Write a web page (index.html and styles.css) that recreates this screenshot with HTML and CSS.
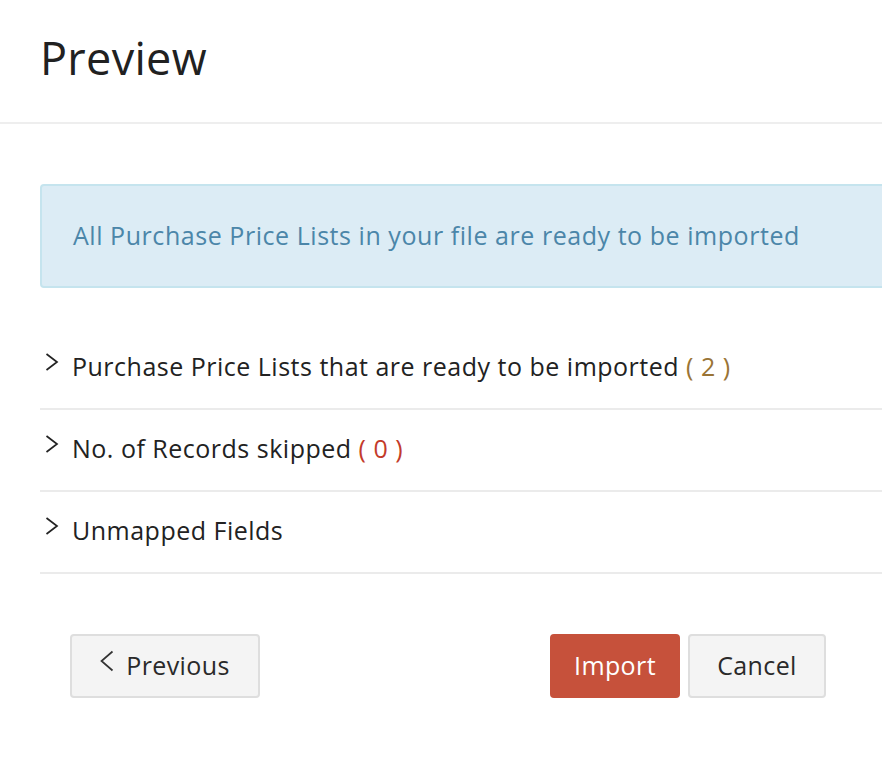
FILE: index.html
```html
<!DOCTYPE html>
<html>
<head>
<meta charset="utf-8">
<link rel="stylesheet" href="styles.css">
</head>
<body>
<div class="page">
  <header class="header">
    <h1 class="title">Preview</h1>
  </header>
  <main class="content">
    <div class="alert">All Purchase Price Lists in your file are ready to be imported</div>
    <ul class="sections">
      <li class="section">
        <svg class="chev" viewBox="0 0 14 20" width="14" height="20"><path d="M1.5 2 L12 10 L1.5 18" fill="none" stroke="#222" stroke-width="1.7"/></svg>
        <span>Purchase Price Lists that are ready to be imported <span class="count-ok">( 2 )</span></span>
      </li>
      <li class="section">
        <svg class="chev" viewBox="0 0 14 20" width="14" height="20"><path d="M1.5 2 L12 10 L1.5 18" fill="none" stroke="#222" stroke-width="1.7"/></svg>
        <span>No. of Records skipped <span class="count-bad">( 0 )</span></span>
      </li>
      <li class="section">
        <svg class="chev" viewBox="0 0 14 20" width="14" height="20"><path d="M1.5 2 L12 10 L1.5 18" fill="none" stroke="#222" stroke-width="1.7"/></svg>
        <span>Unmapped Fields</span>
      </li>
    </ul>
    <div class="actions">
      <button class="btn btn-default btn-prev">
        <svg class="chev-left" viewBox="0 0 14 22" width="14" height="22"><path d="M12.5 1.5 L1.5 11 L12.5 20.5" fill="none" stroke="#333" stroke-width="1.7"/></svg>
        Previous
      </button>
      <div class="right-actions">
        <button class="btn btn-primary btn-import">Import</button>
        <button class="btn btn-default btn-cancel">Cancel</button>
      </div>
    </div>
  </main>
</div>
</body>
</html>
```
FILE: styles.css
```css
html, body {
  margin: 0;
  padding: 0;
  background: #fff;
  overflow: hidden;
}
body {
  font-family: "Open Sans", "Liberation Sans", sans-serif;
  color: #222;
}
.page {
  width: 920px;
}
.header {
  height: 124px;
  border-bottom: 2px solid #eeeeee;
  box-sizing: border-box;
  padding-left: 40px;
}
.title {
  margin: 0;
  padding-top: 28px;
  font-size: 45px;
  font-weight: 400;
  letter-spacing: 0.3px;
  line-height: 60px;
  color: #212121;
}
.content {
  padding: 60px 0 0 40px;
}
.alert {
  background: #dcecf5;
  border: 2px solid #c5e4ee;
  border-radius: 4px;
  height: 104px;
  box-sizing: border-box;
  padding-left: 31px;
  padding-bottom: 2px;
  display: flex;
  align-items: center;
  font-size: 25px;
  letter-spacing: 0.55px;
  color: #4b86a9;
}
.sections {
  list-style: none;
  margin: 40px 0 0 0;
  padding: 0;
}
.section {
  height: 82px;
  box-sizing: border-box;
  border-bottom: 2px solid #ebebeb;
  display: flex;
  align-items: center;
  font-size: 25px;
  letter-spacing: 0.5px;
  color: #222;
  padding-left: 5px;
  padding-bottom: 4px;
}
.chev {
  margin-right: 13px;
  margin-top: -8px;
}
.count-ok { color: #9a7435; }
.count-bad { color: #c33b2a; }
.actions {
  display: flex;
  justify-content: space-between;
  width: 786px;
  margin-top: 60px;
  padding-left: 30px;
  box-sizing: border-box;
}
.right-actions {
  display: flex;
  gap: 8px;
}
.btn {
  height: 64px;
  border-radius: 4px;
  font-family: inherit;
  font-size: 25px;
  letter-spacing: 0.4px;
  padding: 0 0 3px 0;
  display: flex;
  align-items: center;
  justify-content: center;
  box-sizing: border-box;
  cursor: pointer;
}
.btn-prev { width: 190px; }
.btn-import { width: 130px; }
.btn-cancel { width: 138px; }
.btn-default {
  background: #f4f4f4;
  border: 2px solid #dedede;
  color: #2a2a2a;
}
.btn-primary {
  background: #c6513b;
  border: 2px solid #c6513b;
  color: #fff;
}
.chev-left {
  margin-right: 12px;
  margin-top: -8px;
}
```
